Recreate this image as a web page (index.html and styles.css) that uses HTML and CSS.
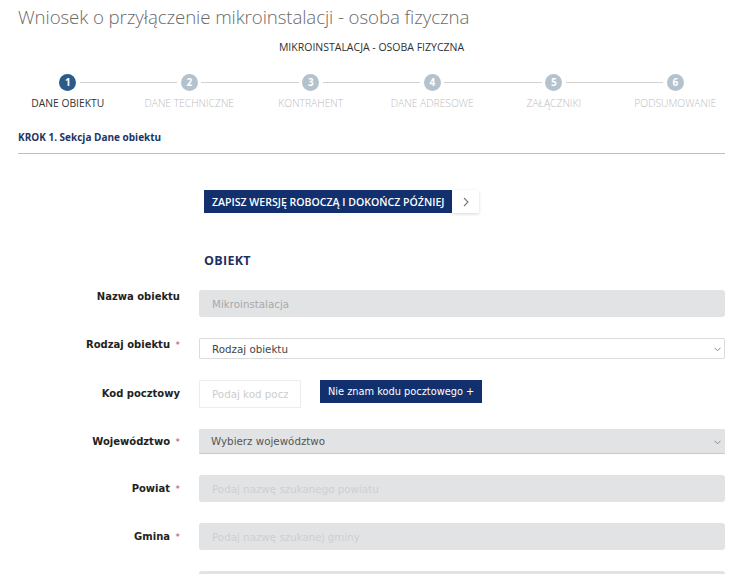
FILE: index.html
```html
<!DOCTYPE html>
<html lang="pl">
<head>
<meta charset="utf-8">
<title>Wniosek o przyłączenie mikroinstalacji</title>
<link rel="stylesheet" href="styles.css">
</head>
<body>
<div class="page">
  <h1 class="title">Wniosek o przyłączenie mikroinstalacji - osoba fizyczna</h1>
  <div class="subtitle">MIKROINSTALACJA - OSOBA FIZYCZNA</div>

  <ol class="steps">
    <li class="step active"><span class="dot">1</span><span class="step-label">DANE OBIEKTU</span></li>
    <li class="step"><span class="dot">2</span><span class="step-label">DANE TECHNICZNE</span></li>
    <li class="step"><span class="dot">3</span><span class="step-label">KONTRAHENT</span></li>
    <li class="step"><span class="dot">4</span><span class="step-label">DANE ADRESOWE</span></li>
    <li class="step"><span class="dot">5</span><span class="step-label">ZAŁĄCZNIKI</span></li>
    <li class="step last"><span class="dot">6</span><span class="step-label">PODSUMOWANIE</span></li>
  </ol>

  <div class="section-head">KROK 1. Sekcja Dane obiektu</div>

  <div class="form">
    <div class="save-row">
      <button class="save-btn" type="button">ZAPISZ WERSJĘ ROBOCZĄ I DOKOŃCZ PÓŹNIEJ</button>
      <span class="save-arrow">
        <svg width="6" height="10" viewBox="0 0 6 10"><path d="M1 1l4 4-4 4" fill="none" stroke="#777" stroke-width="1.1"/></svg>
      </span>
    </div>

    <h2 class="form-title">OBIEKT</h2>

    <div class="rows">
      <div class="row top">
        <label class="label">Nazwa obiektu</label>
        <input class="field grey h27" type="text" value="Mikroinstalacja" disabled>
      </div>
      <div class="row top">
        <label class="label">Rodzaj obiektu <span class="req">*</span></label>
        <div class="select-wrap">
          <select class="field white h21"><option>Rodzaj obiektu</option></select>
          <svg class="chev" width="7" height="5" viewBox="0 0 7 5"><path d="M0.5 0.8l3 3 3-3" fill="none" stroke="#888" stroke-width="1"/></svg>
        </div>
      </div>
      <div class="row">
        <label class="label">Kod pocztowy</label>
        <div class="postal">
          <input class="field white-light postal-input" type="text" placeholder="Podaj kod pocztowy">
          <button class="postal-btn" type="button">Nie znam kodu pocztowego +</button>
        </div>
      </div>
      <div class="row">
        <label class="label">Województwo <span class="req">*</span></label>
        <div class="select-wrap">
          <select class="field grey h25 sel-grey"><option>Wybierz województwo</option></select>
          <svg class="chev" width="7" height="5" viewBox="0 0 7 5"><path d="M0.5 0.8l3 3 3-3" fill="none" stroke="#888" stroke-width="1"/></svg>
        </div>
      </div>
      <div class="row">
        <label class="label">Powiat <span class="req">*</span></label>
        <input class="field grey h27" type="text" placeholder="Podaj nazwę szukanego powiatu" disabled>
      </div>
      <div class="row">
        <label class="label">Gmina <span class="req">*</span></label>
        <input class="field grey h27" type="text" placeholder="Podaj nazwę szukanej gminy" disabled>
      </div>
      <div class="row">
        <span class="label"></span>
        <input class="field grey h27" type="text" disabled>
      </div>
    </div>
  </div>
</div>
</body>
</html>
```
FILE: styles.css
```css
* { box-sizing: border-box; }
html, body { margin: 0; padding: 0; background: #fff; }
body { font-family: "Open Sans", "DejaVu Sans", sans-serif; color: #333; overflow: hidden; }

.page { padding: 0 25px 0 18px; }

.title {
  margin: 0;
  padding-top: 5px;
  font-size: 18.7px;
  line-height: 24px;
  font-weight: 300;
  color: #6a6a6a;
  letter-spacing: -0.1px;
}

.subtitle {
  margin-top: 11px;
  text-align: center;
  font-size: 10.5px;
  line-height: 14px;
  color: #2f2f2f;
}

.steps {
  list-style: none;
  margin: 20px -11px 0 -11px;
  padding: 0;
  display: grid;
  grid-template-columns: repeat(6, 1fr);
}
.step {
  position: relative;
  display: flex;
  flex-direction: column;
  align-items: center;
}
.step::after {
  content: "";
  position: absolute;
  top: 8px;
  left: calc(50% + 12px);
  width: calc(100% - 24px);
  height: 1px;
  background: #d2d2d2;
}
.step.last::after { display: none; }
.dot {
  width: 17px;
  height: 17px;
  border-radius: 50%;
  background: #b4c2cd;
  color: #fff;
  font-size: 10px;
  font-weight: 700;
  line-height: 17px;
  text-align: center;
}
.step.active .dot { background: #2b5b8b; }
.step-label {
  margin-top: 5px;
  font-size: 10.3px;
  line-height: 14px;
  font-weight: 300;
  color: #bdbdbd;
  white-space: nowrap;
}
.step.active .step-label { color: #333; font-weight: 400; }

.section-head {
  margin-top: 20px;
  padding-bottom: 9px;
  border-bottom: 1px solid #bfbfbf;
  font-size: 10px;
  line-height: 14px;
  font-weight: 700;
  color: #1e3563;
}

.form { padding-left: 181px; }

.save-row {
  margin: 36px 0 0 5px;
  display: flex;
  align-items: stretch;
}
.save-btn {
  height: 23px;
  padding: 0 8px;
  border: 0;
  background: #12306d;
  color: #fff;
  font-family: "Open Sans", sans-serif;
  font-size: 10.55px;
  font-weight: 600;
}
.save-arrow {
  width: 27px;
  display: flex;
  align-items: center;
  justify-content: center;
  background: #fff;
  box-shadow: 0 1px 3px rgba(0,0,0,0.16);
}

.form-title {
  margin: 40px 0 0 5px;
  font-size: 12.5px;
  line-height: 16px;
  font-weight: 700;
  color: #1f315e;
  letter-spacing: 0.3px;
}

.rows {
  margin-top: 21px;
  display: flex;
  flex-direction: column;
  gap: 21px;
}
.row {
  display: flex;
  align-items: center;
  margin-left: -181px;
}
.row.top { align-items: flex-start; }
.label {
  width: 163px;
  flex: none;
  padding-right: 1px;
  text-align: right;
  font-family: "DejaVu Sans", sans-serif;
  font-size: 10px;
  line-height: 14px;
  font-weight: 700;
  color: #222;
  margin-right: 18px;
}
.req { color: #d8384f; font-size: 9px; font-weight: 400; margin-left: 2px; }

.field {
  flex: 1;
  width: 100%;
  font-family: "DejaVu Sans", sans-serif;
  font-size: 10.3px;
  padding: 0 13px;
  border-radius: 3px;
  outline: none;
  margin: 0;
}
.field.grey {
  height: 27px;
  background: #e2e3e5;
  border: 0;
  color: #a9a9a9;
}
.field.grey::placeholder { color: #cfcfcf; }
.h21 { height: 21px; }
.h25 { height: 25px !important; }
.h27 { height: 27px; }
.field.white {
  background: #fff;
  border: 1px solid #dcdcdc;
  border-radius: 1px;
  color: #444;
}
select.field {
  -webkit-appearance: none;
  appearance: none;
  padding-left: 12px;
}
.sel-grey {
  color: #555 !important;
  border-radius: 1px !important;
  border-bottom: 1px solid #c8c8c8 !important;
}
.select-wrap {
  position: relative;
  flex: 1;
  display: flex;
}
.chev {
  position: absolute;
  right: 4px;
  top: 50%;
  margin-top: -2px;
}

.postal { flex: 1; display: flex; align-items: flex-start; }
.postal-input {
  flex: none;
  width: 102px;
  height: 28px;
  background: #fff;
  border: 1px solid #ececec;
  border-radius: 1px;
  padding: 0 12px;
  color: #444;
}
.postal-input::placeholder { color: #cdcdcd; }
.postal-btn {
  margin-left: 19px;
  height: 23px;
  padding: 0 8px;
  border: 0;
  background: #12306d;
  color: #fff;
  font-family: "DejaVu Sans", sans-serif;
  font-size: 9.8px;
}
```
